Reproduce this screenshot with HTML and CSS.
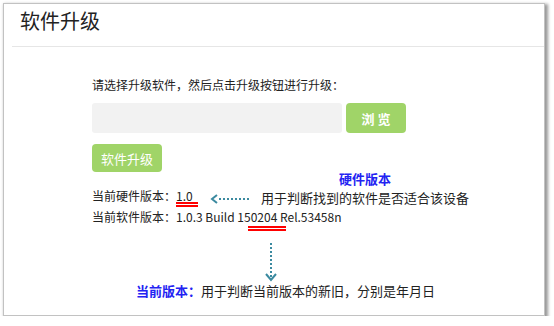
FILE: index.html
```html
<!DOCTYPE html>
<html lang="zh-CN">
<head>
    <meta charset="UTF-8">
    <meta name="viewport" content="width=device-width, initial-scale=1.0">
    <title>软件升级</title>
    <link rel="stylesheet" href="styles.css">
</head>
<body>

<div class="frame">
    <div class="header">
        <h1 class="title">软件升级</h1>
    </div>

    <div class="content">
        <p class="tip">请选择升级软件，然后点击升级按钮进行升级：</p>

        <div class="file-row">
            <input type="text" class="file-input" readonly>
            <button type="button" class="btn browse-btn">浏 览</button>
        </div>

        <button type="button" class="btn upgrade-btn">软件升级</button>

        <div class="info">
            <div class="info-line">当前硬件版本：1.0</div>
            <div class="info-line">当前软件版本：1.0.3 Build 150204 Rel.53458n</div>
        </div>
    </div>

    <!-- annotations drawn over the screenshot -->
    <span class="underline hw-mark"></span>
    <span class="underline sw-mark"></span>

    <svg class="arrow-left" width="40" height="10" viewBox="0 0 40 10">
        <line x1="9" y1="5" x2="40" y2="5" stroke="#3b8aa0" stroke-width="2" stroke-dasharray="2 2"/>
        <polyline points="7,1 2,5 7,9" fill="none" stroke="#3b8aa0" stroke-width="2"/>
    </svg>

    <div class="note hw-title">硬件版本</div>
    <div class="note hw-desc">用于判断找到的软件是否适合该设备</div>

    <svg class="arrow-down" width="12" height="40" viewBox="0 0 12 40">
        <line x1="6" y1="0" x2="6" y2="36" stroke="#3b8aa0" stroke-width="2" stroke-dasharray="2 2"/>
        <polyline points="1,31 6,37 11,31" fill="none" stroke="#3b8aa0" stroke-width="2"/>
    </svg>

    <div class="note sw-desc"><b class="blue">当前版本：</b>用于判断当前版本的新旧，分别是年月日</div>
</div>

</body>
</html>
```

FILE: styles.css
```css
body {
    margin: 0;
    background-color: #fff;
    font-family: "Noto Sans CJK SC", "Liberation Sans", sans-serif;
    color: #222;
}

.frame {
    position: relative;
    margin: 3px 0 0 3px;
    width: 540px;
    height: 311px;
    border: 1px solid #c2c2c2;
    box-shadow: 2px 2px 3px 1px rgba(0, 0, 0, 0.4);
    background-color: #fff;
}

.header {
    height: 42px;
    margin-left: 8px;
    padding-left: 8px;
    border-bottom: 1px solid #e6e6e6;
}

.title {
    margin: 0;
    font-size: 20px;
    font-weight: normal;
    line-height: 34px;
    color: #222;
}

.content {
    padding-left: 88px;
}

.tip {
    margin: 28px 0 0 0;
    font-size: 12px;
    line-height: 20px;
}

.file-row {
    display: flex;
    gap: 4px;
    margin-top: 8px;
}

.file-input {
    width: 250px;
    height: 30px;
    box-sizing: border-box;
    border: none;
    border-radius: 3px;
    background-color: #f2f2f2;
}

.btn {
    border: none;
    border-radius: 4px;
    background-color: #a0d468;
    color: #fff;
    font-family: inherit;
    font-size: 13px;
    padding: 0;
    cursor: pointer;
}

.browse-btn {
    width: 60px;
    height: 30px;
    font-weight: bold;
}

.upgrade-btn {
    display: block;
    width: 70px;
    height: 28px;
    margin-top: 11px;
}

.info {
    margin-top: 13px;
    font-size: 12px;
}

.info-line {
    line-height: 21px;
}

.underline {
    position: absolute;
    height: 1px;
    border-top: 2px solid #f00;
    border-bottom: 2px solid #f00;
}

.hw-mark {
    left: 172px;
    top: 198px;
    width: 22px;
}

.sw-mark {
    left: 244px;
    top: 222px;
    width: 38px;
}

.arrow-left {
    position: absolute;
    left: 206px;
    top: 190px;
}

.arrow-down {
    position: absolute;
    left: 261px;
    top: 239px;
}

.note {
    position: absolute;
    font-size: 13px;
    line-height: 16px;
    white-space: nowrap;
}

.hw-title {
    left: 335px;
    top: 168px;
    line-height: 13px;
    font-weight: bold;
    color: #2323f2;
}

.hw-desc {
    left: 257px;
    top: 187px;
    line-height: 13px;
}

.sw-desc {
    left: 132px;
    top: 279px;
}

.blue {
    color: #2323f2;
}
```
